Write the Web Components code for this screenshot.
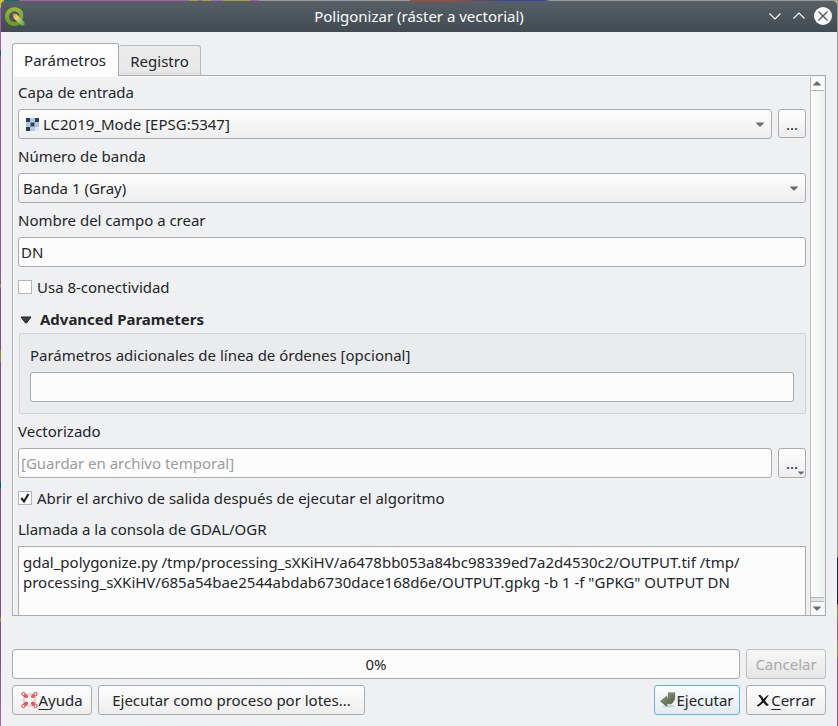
<!DOCTYPE html>
<html lang="es">
<head>
<meta charset="utf-8">
<title>Poligonizar (ráster a vectorial)</title>
<style>
html,body{margin:0;width:838px;height:726px;overflow:hidden}
body{font:14.99px/20px "Noto Sans",sans-serif;color:#232629}
</style>
</head>
<body>
<dialog-window>
  <title-bar slot="title">Poligonizar (ráster a vectorial)</title-bar>
  <tab-pane>
    <form-label style="height:33px;padding-bottom:1px">Capa de entrada</form-label>
    <form-row>
      <combo-box icon>LC2019_Mode [EPSG:5347]</combo-box>
      <tool-button>...</tool-button>
    </form-row>
    <form-label>Número de banda</form-label>
    <combo-box>Banda 1 (Gray)</combo-box>
    <form-label>Nombre del campo a crear</form-label>
    <text-field>DN</text-field>
    <check-box>Usa 8-conectividad</check-box>
    <group-box>
      <span slot="title">Advanced Parameters</span>
      <form-label style="height:38px;padding-top:4px">Parámetros adicionales de línea de órdenes [opcional]</form-label>
      <text-field></text-field>
    </group-box>
    <form-label>Vectorizado</form-label>
    <form-row>
      <text-field placeholder>[Guardar en archivo temporal]</text-field>
      <tool-button menu>...</tool-button>
    </form-row>
    <check-box checked>Abrir el archivo de salida después de ejecutar el algoritmo</check-box>
    <form-label style="height:28px;padding-bottom:6px">Llamada a la consola de GDAL/OGR</form-label>
    <console-text>gdal_polygonize.py /tmp/processing_sXKiHV/a6478bb053a84bc98339ed7a2d4530c2/OUTPUT.tif /tmp/<br>processing_sXKiHV/685a54bae2544abdab6730dace168d6e/OUTPUT.gpkg -b 1 -f "GPKG" OUTPUT DN</console-text>
  </tab-pane>
  <button-row slot="footer">
    <progress-meter>0%</progress-meter>
    <push-button style="width:80px" disabled>Cancelar</push-button>
  </button-row>
  <button-row slot="footer">
    <push-button style="width:80px" icon="help"><u>A</u>yuda</push-button>
    <push-button style="width:267px">Ejecutar como proceso por lotes...</push-button>
    <push-button style="width:86px;margin-left:auto" icon="run" primary>Ejecutar</push-button>
    <push-button style="width:80px" icon="close"><u>C</u>errar</push-button>
  </button-row>
</dialog-window>
<script>
const BASE = '*,:host{box-sizing:border-box}:host([hidden]){display:none}';
function define(name, css, html) {
  customElements.define(name, class extends HTMLElement {
    constructor() {
      super();
      const t = document.createElement('template');
      t.innerHTML = `<style>${BASE}${css}</style>` + (typeof html === 'function' ? html(this) : html);
      this.attachShadow({mode: 'open'}).append(t.content.cloneNode(true));
    }
  });
}
const ICONS = {
  help: `<svg width="17" height="18" viewBox="0 0 18 18"><circle cx="9" cy="9" r="6" fill="none" stroke="#d8d8d8" stroke-width="3"/><circle cx="9" cy="9" r="4.3" fill="none" stroke="#f4f4f4"/><g fill="#fff" stroke="#c8323a"><circle cx="2.600" cy="2.600" r="1.7"/><circle cx="15.400" cy="2.600" r="1.7"/><circle cx="2.600" cy="15.400" r="1.7"/><circle cx="15.400" cy="15.400" r="1.7"/></g><g fill="#f05054"><path d="M5.500 2.500L7.500 5 7 6.500 5 7 2.500 5.500z"/><path d="M12.500 2.500L10.500 5 11 6.500 13 7 15.500 5.500z"/><path d="M5.500 15.500L7.500 13 7 11 5 10.500 2.500 12.500z"/><path d="M12.500 15.500L10.500 13 11 11 13 10.500 15.500 12.500z"/></g></svg>`,
  run: `<svg width="16" height="18" viewBox="0 0 16 18"><defs><linearGradient id="g" x2="1" y2="1"><stop stop-color="#8e9b7c"/><stop offset="1" stop-color="#4e5f43"/></linearGradient></defs><ellipse cx="8.500" cy="15.200" rx="6" ry="1.300" fill="#000" opacity=".13"/><path d="M8.300 1.800H14.700V8.500L11.500 12.800H6.700V15.200L.6 10.300 6.700 5.300V7.300H8.300z" fill="url(#g)" stroke="#4a5942" stroke-width=".6"/><path d="M8.800 2.300H14.200" stroke="#a9b49c" stroke-width=".6"/></svg>`,
  close: `<svg style="margin-top:1px" width="15" height="18" viewBox="0 0 15 18"><path d="M2.200 3.200L4.300 2.700Q6.200 4.500 7.700 7Q9.800 4.500 12 3L12.600 3.500Q10.500 6 9 8.800Q10.800 11.500 12.900 13L10.900 14Q9 12.800 7.400 10.600Q5.200 13 2.200 14.500L.8 13.600Q4.200 11.500 6 8.800Q4.200 5.500 2.200 3.200z" fill="#161616"/></svg>`
};
const ARROW = '<svg class="arrow" width="8" height="5" viewBox="0 0 8 5"><path d="M0 .5H8V1L4.500 4.500H3.500L0 1z" fill="#6a6c6d"/></svg>';

define('dialog-window', `
:host{display:block;width:838px;height:726px;padding:1px;
 background:linear-gradient(90deg,#d4bf2e 0 4px,#136c65 4px 19px,#a75fac 19px 189px,#aaa239 189px 198px,#a966a9 198px 202px,#aaa239 202px 211px,#a967ae 211px 223px,#aaa239 223px 250px,#a75fac 250px 259px,#999 259px 410px,#b42 410px 450px,#34a 505px 545px,#999 550px) 0 0/838px 1px no-repeat,
 linear-gradient(#979899 0 557px,#14284e 558px 599px,#15151a 600px 604px,#858641 605px 618px,#8c6389 619px 640px,#858641 642px 657px,#8a5b90 658px) 837px 0/1px 726px no-repeat,
 linear-gradient(#cfc035 0 7px,#a45ca6 8px 50px,#196761 51px 56px,#8f5296 57px 284px,#999236 285px 287px,#854c8b 288px 350px,#91853a 351px 361px,#854c8b 362px 481px,#08605b 482px 488px,#854c8b 489px 617px,#999236 618px 621px,#854c8b 622px 660px,#a765ac)}
.win{display:flex;flex-direction:column;width:836px;height:725px;background:#eff0f1;border-radius:4px 4px 0 0;overflow:hidden}
.body{display:flex;flex-direction:column;padding:11px 11px 0;gap:6px}
.body ::slotted(tab-pane){margin-bottom:27px}`,
`<div class="win"><slot name="title"></slot><div class="body"><slot></slot><slot name="footer"></slot></div></div>`);

define('title-bar', `
:host{display:grid;grid-template-columns:86px 1fr 86px;align-items:center;height:31px;flex:none;background:linear-gradient(#566066,#434b52);color:#fcfcfc;padding-bottom:1px}
.t{text-align:center}.logo{display:block;margin:-1px 0 0 2px}.btns{display:block;justify-self:end;margin-right:5px}`,
`<svg class="logo" width="24" height="24" viewBox="0 0 24 24"><defs><linearGradient id="q" x2="0" y2="1"><stop stop-color="#93b83c"/><stop offset="1" stop-color="#6a9c28"/></linearGradient><linearGradient id="p" x2="1" y2="1"><stop stop-color="#ee7923"/><stop offset=".35" stop-color="#f3cf76"/><stop offset=".6" stop-color="#9fc66d"/><stop offset="1" stop-color="#5d9b3f"/></linearGradient></defs><path d="M17 17.500A7.400 7.400 0 1 1 18.100 9.500Q18.800 12.500 17.500 15.500" fill="none" stroke="url(#q)" stroke-width="4"/><path d="M9.500 9.500L13.500 10 21.500 18.500V21.500H18.500L10.500 14z" fill="url(#p)"/></svg>
<div class="t"><slot></slot></div>
<svg class="btns" width="68" height="22" viewBox="0 0 68 22" fill="none"><path d="M5.500 8.500L11 14 16.500 8.500M29.500 13.500L35 8 40.500 13.500" stroke="#fcfcfc" stroke-width="1.100"/><circle cx="59" cy="11" r="9" fill="#fcfcfc"/><path d="M54.500 6.500L63.500 15.500M63.500 6.500L54.500 15.500" stroke="#4a545a" stroke-width="1.300"/></svg>`);

define('tab-pane', `
:host{display:block}
.tabs{display:flex;align-items:flex-end;height:33px;position:relative;z-index:1;margin-bottom:-1px}
.tab{border:1px solid #a9abad;border-bottom:0;border-radius:3px 3px 0 0;text-align:center}
.on{width:107px;height:33px;background:#fdfdfd;line-height:33px;padding-right:1px}
.off{width:82px;height:31px;border-left:0;background:linear-gradient(#ebebeb,#e8e8e8 85%,#dfdfdf);line-height:31px;border-color:#b9bbbc;border-bottom:1px solid #a9abad}
.pane{display:grid;grid-template-columns:1fr 14px;width:814px;height:541px;border:1px solid #a9abad;padding-right:1px}
.content{overflow:hidden;padding:0 4px 0 5px;box-shadow:inset 1px 1px #fbfbfb}
.bar{display:flex;flex-direction:column;border-left:1px solid #b6b7b8;background:linear-gradient(90deg,#fcfcfc,#eff0f0);margin-top:1px}
.b{height:14px;display:grid;place-items:center;background:#fafafa;border-bottom:1px solid #b6b7b8;padding-right:1px}
.groove{margin-top:auto;height:5px;background:#e3e3e3;border-top:1px solid #b6b7b8;border-bottom:1px solid #b6b7b8}
.dn{height:13px;border:0}.up svg{transform:rotate(180deg)}`,
`<div class="tabs"><div class="tab on">Parámetros</div><div class="tab off">Registro</div></div>
<div class="pane"><div class="content"><slot></slot></div><div class="bar"><div class="b up">${ARROW}</div><div class="groove"></div><div class="b dn">${ARROW}</div></div></div>`);

define('form-label', ':host{display:flex;align-items:center;height:34px}', '<slot></slot>');
define('form-row', ':host{display:flex;gap:6px}::slotted(:first-child){flex:1}', '<slot></slot>');

define('combo-box', `
:host{display:flex;align-items:center;height:30px;border:1px solid #a9abad;border-radius:3px;background:linear-gradient(#fdfdfd,#eee);padding:0 7px 0 4px}
.arrow{margin-left:auto;margin-top:1px}.ic{margin:1px 4px 0 3px}`,
el => (el.hasAttribute('icon') ? `<svg class="ic" width="13" height="13" viewBox="0 0 13 13" shape-rendering="crispEdges"><path fill="#b4c7e0" d="M0 0h13v13H0z"/><path fill="#7f96b2" d="M4 4h5v5H4z"/><path fill="#2c3d50" d="M0 0h4v4H0zM9 0h4v4H9zM5 5h3v3H5zM0 9h4v4H0z"/><path fill="#dbe7f5" d="M9 9h4v4H9z"/></svg>` : '') + '<slot></slot>' + ARROW);

define('text-field', `
:host{display:flex;align-items:center;height:30px;border:1px solid #a9abad;border-radius:3px;background:#fcfcfc;padding:0 2px}
:host([placeholder]){color:#9b9d9e}`, '<slot></slot>');

define('tool-button', `
:host{display:flex;justify-content:center;align-items:center;position:relative;width:28px;height:29px;border:1px solid #a9abad;border-radius:3px;background:linear-gradient(#fdfdfd,#eee);padding-top:1px}
:host([menu]){height:30px;padding-top:0}.arrow{display:none}:host([menu]) .arrow{display:block;position:absolute;right:1px;bottom:2px;width:6px;height:4px}`, '<slot></slot>' + ARROW);

define('check-box', `
:host{display:flex;align-items:center;height:40px;gap:5px}
.box{width:14px;height:14px;border:1px solid #b4b6b7;background:#fcfcfc}
svg{display:none}:host([checked]) svg{display:block}`,
`<span class="box"><svg width="12" height="12" viewBox="0 0 12 12"><path d="M2.200 6L5 9.500 9.500 2" fill="none" stroke="#1c1e20" stroke-width="2.100"/></svg></span><span><slot></slot></span>`);

define('group-box', `
:host{display:block}
.h{display:flex;align-items:center;height:26px;font-weight:700;padding:0 0 2px 2px;gap:8px}.h svg{margin-top:2px}
.f{height:81px;margin-left:1px;border:1px solid #d3d4d6;background:#eaebed;padding:0 11px 0 10px;border-radius:1px}`,
`<div class="h"><svg width="12" height="8" viewBox="0 0 12 8"><path d="M1 1H11L6.500 7H5.500z" fill="#3c3f41" stroke="#1e2022"/></svg><slot name="title"></slot></div><div class="f"><slot></slot></div>`);

define('console-text', ':host{display:block;height:100px;border:1px solid #a9abad;background:#fcfcfc;padding:5px 4px;white-space:nowrap}', '<slot></slot>');
define('button-row', ':host{display:flex;gap:6px;width:814px}', '<slot></slot>');
define('progress-meter', ':host{display:flex;flex:1;height:30px;align-items:center;justify-content:center;border:1px solid #a9abad;border-radius:3px;background:#fcfcfc}', '<slot></slot>');
define('push-button', `
:host{display:flex;flex:none;height:30px;align-items:center;justify-content:center;white-space:nowrap;border:1px solid #a9abad;border-radius:3px;background:linear-gradient(#fdfdfd,#eee)}
:host([disabled]){color:#a8aaab;border-color:#bfc1c2;background:linear-gradient(#f8f8f8,#e5e5e5)}
:host([primary]){border-color:#5fb5e3;background:linear-gradient(#fcfdfe,#e2eaf0)}
svg{flex:none}::slotted(u){text-decoration-thickness:1px;text-underline-offset:3px}`,
el => (ICONS[el.getAttribute('icon')] || '') + '<span><slot></slot></span>');
</script>
</body>
</html>
